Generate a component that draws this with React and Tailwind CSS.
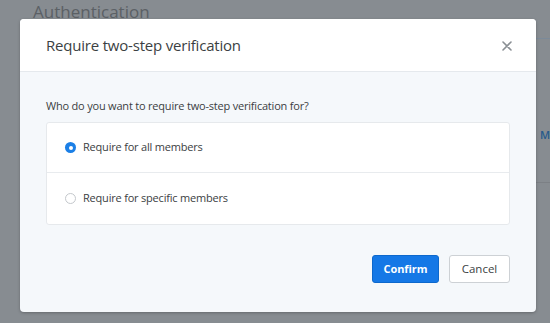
import React from "react";

export default function App() {
  const font = { fontFamily: '"Open Sans", "Noto Sans", sans-serif' };
  return (
    <div className="relative w-[550px] h-[323px] overflow-hidden bg-[#878c91]" style={font}>
      {/* dimmed background page */}
      <div className="flex flex-col pl-[33px] pt-[1px]">
        <div className="text-[17px] leading-[22px] text-[#5b6065]">Authentication</div>
        <div className="mt-[15px] flex flex-col">
          <div className="h-[1px] bg-[#7b8a99]"></div>
          <div className="h-[143px] flex flex-col items-end pt-[89px]">
            <span className="text-[11px] leading-[14px] font-semibold text-[#265a8c] w-[10px]">M</span>
          </div>
          <div className="h-[1px] bg-[#7c8085]"></div>
        </div>
      </div>

      {/* modal */}
      <div className="absolute left-[20px] top-[19px] w-[516px] rounded-[4px] overflow-hidden bg-[#f5f8fb] shadow-[0_1px_3px_rgba(0,0,0,0.25)]">
        <div className="h-[53px] bg-white border-b border-[#e5e9ed] flex items-center justify-between pl-[26px] pr-[24px]">
          <div className="text-[15px] leading-[20px] tracking-[-0.2px] text-[#3b3f43]">Require two-step verification</div>
          <svg width="10" height="10" viewBox="0 0 10 10" className="mt-[1px]">
            <path d="M1 1L9 9M9 1L1 9" stroke="#8a8f94" strokeWidth="1.6" strokeLinecap="round" />
          </svg>
        </div>
        <div className="flex flex-col px-[26px] pt-[26px] pb-[29px]">
          <div className="text-[11px] leading-[16px] tracking-[-0.2px] text-[#3b3e42]">Who do you want to require two-step verification for?</div>
          <div className="mt-[8px] bg-white border border-[#e6e9ec] rounded-[3px] flex flex-col">
            <label className="h-[50px] flex items-center pl-[18px] gap-[7px] border-b border-[#e8ebee]">
              <span className="w-[11px] h-[11px] rounded-full bg-[#1b7fe6] flex items-center justify-center">
                <span className="w-[4px] h-[4px] rounded-full bg-white"></span>
              </span>
              <span className="text-[11px] tracking-[-0.2px] text-[#3b3e42]">Require for all members</span>
            </label>
            <label className="h-[51px] flex items-center pl-[18px] gap-[7px]">
              <span className="w-[11px] h-[11px] rounded-full bg-white border border-[#c4c8cc]"></span>
              <span className="text-[11px] tracking-[-0.2px] text-[#3b3e42]">Require for specific members</span>
            </label>
          </div>
          <div className="mt-[30px] flex justify-end gap-[10px]">
            <button className="w-[67px] h-[28px] rounded-[3px] bg-[#1578e6] border border-[#0d68cc] text-white text-[11px] tracking-[-0.1px] font-bold">Confirm</button>
            <button className="w-[61px] h-[28px] rounded-[3px] bg-white border border-[#cdd1d5] text-[#3b3f43] text-[11.5px]">Cancel</button>
          </div>
        </div>
      </div>
    </div>
  );
}
